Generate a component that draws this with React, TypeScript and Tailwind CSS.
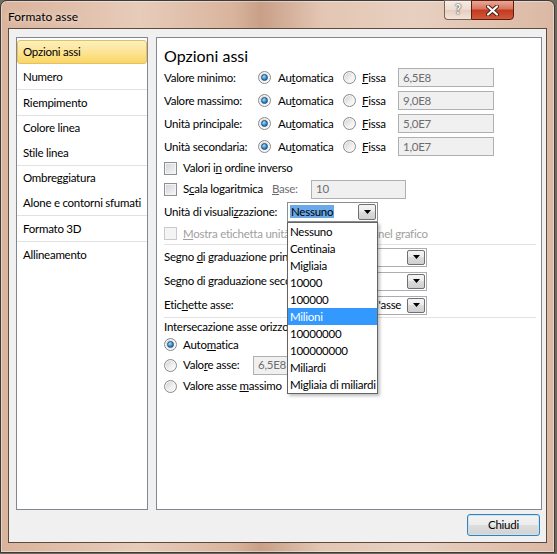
import React from "react";

const NAV: string[][] = [
  ["Opzioni assi"],
  ["Numero"],
  ["Riempimento"],
  ["Colore linea", "Stile linea"],
  ["Ombreggiatura", "Alone e contorni sfumati"],
  ["Formato 3D"],
  ["Allineamento"],
];

const UNITS = [
  "Nessuno",
  "Centinaia",
  "Migliaia",
  "10000",
  "100000",
  "Milioni",
  "10000000",
  "100000000",
  "Miliardi",
  "Migliaia di miliardi",
];

function Radio({ checked = false }: { checked?: boolean }) {
  return (
    <span className="flex h-[13px] w-[13px] shrink-0 items-center justify-center rounded-full border border-[#8b8b8b] bg-[linear-gradient(135deg,#cdcdcd,#f2f2f2_60%,#ffffff)] shadow-[inset_0_0_0_1px_#f6f6f6]">
      {checked && (
        <span className="h-[7px] w-[7px] rounded-full border border-[#1b4f7d] bg-[radial-gradient(circle_at_35%_30%,#a8defb,#2f86c8_60%,#164d83)]" />
      )}
    </span>
  );
}

function Check({ disabled = false }: { disabled?: boolean }) {
  return disabled ? (
    <span className="h-[13px] w-[13px] shrink-0 border border-[#cacaca] bg-[#f4f4f4]" />
  ) : (
    <span className="h-[13px] w-[13px] shrink-0 border border-[#8e8f8f] bg-[linear-gradient(135deg,#d0d3d8,#f7f7f7)] shadow-[inset_0_0_0_1px_#f4f4f4]" />
  );
}

function ArrowBtn() {
  return (
    <span className="flex h-full w-[18px] shrink-0 items-center justify-center rounded-[2px] border border-[#707070] bg-[linear-gradient(#f4f4f4,#ebebeb_45%,#dcdcdc_50%,#cfcfcf)]">
      <svg width="7" height="4" viewBox="0 0 7 4">
        <path d="M0 0h7L3.5 4z" fill="#000" />
      </svg>
    </span>
  );
}

function Combo({ value }: { value: string }) {
  return (
    <div className="flex h-[19px] w-[105px] items-center border border-[#abadb3] bg-white p-px pl-[3px]">
      <span className="flex-1 whitespace-nowrap">{value}</span>
      <ArrowBtn />
    </div>
  );
}

function Field({ value, w }: { value: string; w: string }) {
  return (
    <div className={`flex h-[19px] items-center border border-[#b0b0b0] bg-[#f0f0f0] pl-[4px] text-[#6d6d6d] ${w}`}>
      {value}
    </div>
  );
}

function ValueRow({ label, value }: { label: string; value: string }) {
  return (
    <div className="flex h-[23px] items-center">
      <span className="w-[94px]">{label}</span>
      <span className="flex w-[85px] items-center">
        <Radio checked />
        <span className="ml-[7px]">
          Au<u>t</u>omatica
        </span>
      </span>
      <span className="flex w-[55px] items-center">
        <Radio />
        <span className="ml-[6px]">
          <u>F</u>issa
        </span>
      </span>
      <Field value={value} w="w-[96px]" />
    </div>
  );
}

function Sep() {
  return <div className="h-px bg-[#e2e2e2]" />;
}

export default function App() {
  return (
    <div className="h-[554px] w-[557px] bg-[#6f6a5c] font-['Lato','Noto_Sans',sans-serif] text-[11.5px] tracking-[-0.25px] text-black">
      <div className="flex h-[553px] w-[555px] flex-col rounded-t-[7px] border border-[#3b3b3b] bg-[linear-gradient(90deg,#dab39b,#e7ccba_25%,#d9b49d_42%,#c99f87_47%,#e3c6b3_58%,#e8d0c0_75%,#dbb8a3)] px-[7px] pb-[9px] shadow-[inset_0_0_0_1px_rgba(255,255,255,0.4)]">
        {/* title bar */}
        <div className="flex h-[27px] shrink-0 items-start justify-between">
          <span className="mt-[7px] text-[12px] tracking-normal [text-shadow:0_0_6px_rgba(255,255,255,0.9)]">Formato asse</span>
          <div className="-mt-px mr-[33px] flex">
            <div className="flex h-[20px] w-[27px] items-center justify-center rounded-bl-[4px] border border-r-0 border-[#7a6456] bg-[linear-gradient(rgba(255,255,255,0.65),rgba(255,255,255,0.35)_50%,rgba(230,210,200,0.4)_50%,rgba(255,255,255,0.5))] text-[13px] font-bold text-white [text-shadow:0_0_2px_#333,0_0_1px_#333]">
              ?
            </div>
            <div className="flex h-[20px] w-[43px] items-center justify-center rounded-br-[4px] border border-[#5b1c12] bg-[linear-gradient(#e9a898,#d7735c_45%,#c2391f_50%,#d0593c)]">
              <svg width="13" height="11" viewBox="0 0 13 11">
                <path d="M2 1.5l9 8M11 1.5l-9 8" stroke="#4a1a12" strokeWidth="4" strokeLinecap="round" />
                <path d="M2 1.5l9 8M11 1.5l-9 8" stroke="#fff" strokeWidth="2.2" strokeLinecap="round" />
              </svg>
            </div>
          </div>
        </div>

        {/* client area */}
        <div className="flex h-[515px] flex-col border border-[#5b4a40] bg-[#f0f0f0] pl-[7px] pr-[4px] pt-[8px]">
          <div className="flex h-[473px] gap-2">
            {/* left nav */}
            <div className="flex h-full w-[132px] flex-col border border-[#828790] bg-white pt-[2px]">
              {NAV.map((group, gi) => (
                <React.Fragment key={gi}>
                  {gi > 1 && <Sep />}
                  {group.map((item, ii) =>
                    gi === 0 ? (
                      <div
                        key={item}
                        className="flex h-[24px] items-center rounded-[3px] border border-[#e2c163] bg-[linear-gradient(#fdf0bd,#fde496_50%,#fbd665)] pl-[5px]"
                      >
                        {item}
                      </div>
                    ) : (
                      <div
                        key={item}
                        className={`flex items-center whitespace-nowrap pl-[6px] ${group.length > 1 && ii === 0 ? "h-[24px]" : "h-[25px]"}`}
                      >
                        {item}
                      </div>
                    )
                  )}
                </React.Fragment>
              ))}
            </div>

            {/* right panel */}
            <div className="relative flex h-full flex-1 flex-col border border-[#828790] bg-white pl-[7px] pr-[5px] pt-[8px]">
              <div className="h-[20px] text-[16px] leading-[20px] tracking-normal">Opzioni assi</div>
              <ValueRow label="Valore minimo:" value="6,5E8" />
              <ValueRow label="Valore massimo:" value="9,0E8" />
              <ValueRow label="Unità principale:" value="5,0E7" />
              <ValueRow label="Unità secondaria:" value="1,0E7" />

              <div className="flex h-[20px] items-center">
                <Check />
                <span className="ml-[6px]">
                  Valori i<u>n</u> ordine inverso
                </span>
              </div>
              <div className="flex h-[22px] items-center">
                <span className="flex w-[108px] items-center">
                  <Check />
                  <span className="ml-[6px]">
                    S<u>c</u>ala logaritmica
                  </span>
                </span>
                <span className="w-[39px] text-[#6d6d6d]">
                  <u>B</u>ase:
                </span>
                <Field value="10" w="w-[95px]" />
              </div>
              <div className="flex h-[23px] items-center">
                <span className="w-[123px]">
                  Unità di visuali<u>z</u>zazione:
                </span>
                <div className="flex h-[20px] w-[91px] items-center border border-[#8c8f94] bg-white p-px">
                  <span className="ml-[1px] flex-1">
                    <span className="bg-[#6aa9e9] px-[1px]">Nessuno</span>
                  </span>
                  <ArrowBtn />
                </div>
              </div>
              <div className="flex h-[21px] items-center text-[#a0a0a0]">
                <Check disabled />
                <span className="ml-[6px] w-[104px] overflow-hidden whitespace-nowrap">
                  <u>M</u>ostra etichetta unità di visualizzazione
                </span>
                <span className="ml-[91px] whitespace-nowrap">nel grafico</span>
              </div>
              <Sep />

              <div className="flex h-[24px] items-center">
                <span className="w-[123px] overflow-hidden whitespace-nowrap">
                  Segno <u>d</u>i graduazione principale:
                </span>
                <span className="w-[35px]" />
                <Combo value="Esterno" />
              </div>
              <div className="flex h-[24px] items-center">
                <span className="w-[123px] overflow-hidden whitespace-nowrap">
                  Se<u>g</u>no di graduazione secondario:
                </span>
                <span className="w-[35px]" />
                <Combo value="Nessuno" />
              </div>
              <div className="flex h-[24px] items-center">
                <span className="w-[158px]">
                  Etic<u>h</u>ette asse:
                </span>
                <Combo value="Accanto all'asse" />
              </div>
              <Sep />

              <div className="flex h-[17px] items-center">
                <span className="w-[123px] overflow-hidden whitespace-nowrap">Intersecazione asse orizzontale:</span>
              </div>
              <div className="flex h-[19px] items-center">
                <Radio checked />
                <span className="ml-[6px]">
                  Auto<u>m</u>atica
                </span>
              </div>
              <div className="flex h-[22px] items-center">
                <span className="flex w-[89px] items-center">
                  <Radio />
                  <span className="ml-[6px]">
                    Valo<u>r</u>e asse:
                  </span>
                </span>
                <Field value="6,5E8" w="w-[96px]" />
              </div>
              <div className="flex h-[20px] items-center">
                <Radio />
                <span className="ml-[6px]">
                  Valore asse <u>m</u>assimo
                </span>
              </div>

              {/* open dropdown list */}
              <div className="absolute left-[130px] top-[184px] z-10 w-[91px] border border-[#646464] bg-white shadow-[2px_2px_3px_rgba(0,0,0,0.25)]">
                {UNITS.map((u) => (
                  <div
                    key={u}
                    className={`h-[17px] whitespace-nowrap pl-[2px] leading-[17px] ${u === "Milioni" ? "bg-[#3399ff] text-white" : ""}`}
                  >
                    {u}
                  </div>
                ))}
              </div>
            </div>
          </div>

          <div className="mt-[4px] flex justify-end pr-[2px]">
            <button className="h-[22px] w-[73px] rounded-[3px] border border-[#3c7fb1] bg-[linear-gradient(#f4f4f4,#ececec_50%,#dedede_50%,#d2d2d2)] shadow-[inset_0_0_0_1px_#c6e4f7]">
              Chiudi
            </button>
          </div>
        </div>
      </div>
    </div>
  );
}
